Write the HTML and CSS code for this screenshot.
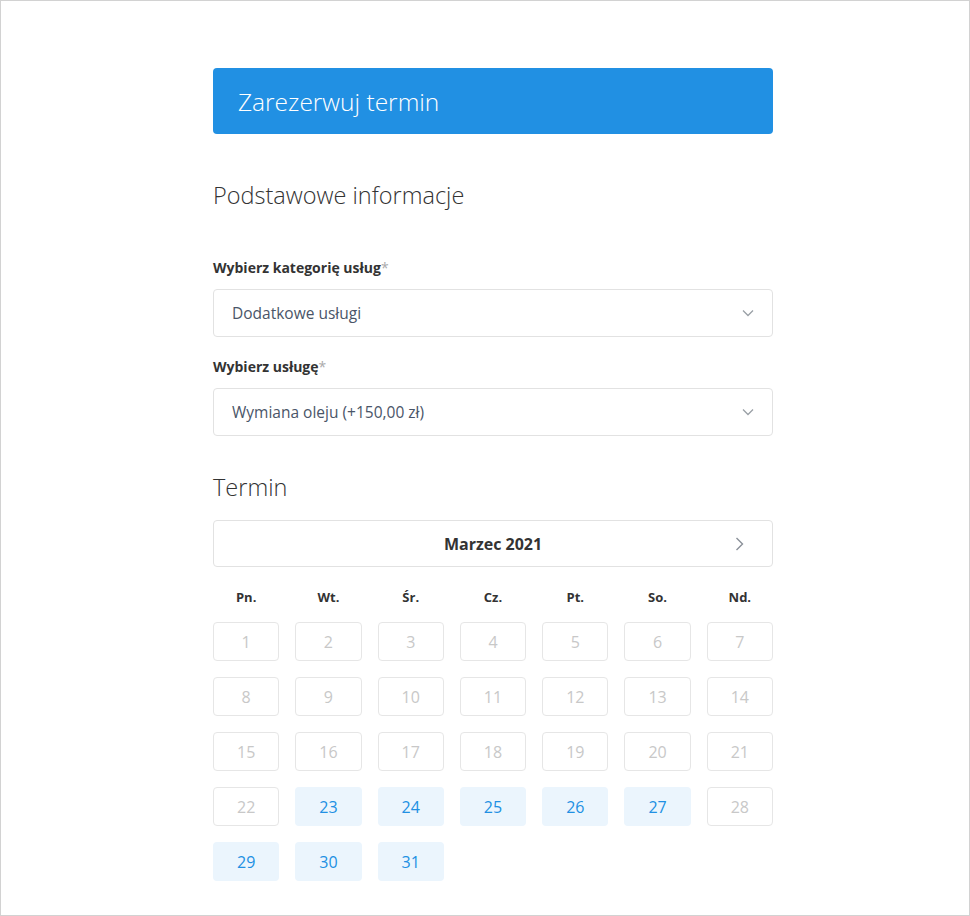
FILE: index.html
```html
<!DOCTYPE html>
<html lang="pl">
<head>
<meta charset="utf-8">
<link rel="stylesheet" href="styles.css">
</head>
<body>
<div class="frame">
  <main class="form">
    <header class="banner">Zarezerwuj termin</header>

    <h2 class="section-title first">Podstawowe informacje</h2>

    <label class="label">Wybierz kategorię usług<span class="req">*</span></label>
    <div class="select">
      <span>Dodatkowe usługi</span>
      <svg class="chev-down" width="12" height="8" viewBox="0 0 12 8"><path d="M1 1.5 L6 6.5 L11 1.5" fill="none" stroke="#9aa0a6" stroke-width="1.3"/></svg>
    </div>

    <label class="label">Wybierz usługę<span class="req">*</span></label>
    <div class="select">
      <span>Wymiana oleju (+150,00 zł)</span>
      <svg class="chev-down" width="12" height="8" viewBox="0 0 12 8"><path d="M1 1.5 L6 6.5 L11 1.5" fill="none" stroke="#9aa0a6" stroke-width="1.3"/></svg>
    </div>

    <h2 class="section-title">Termin</h2>

    <div class="month">
      <span class="month-name">Marzec 2021</span>
      <svg class="chev-right" width="9" height="14" viewBox="0 0 9 14"><path d="M1.5 1 L7.5 7 L1.5 13" fill="none" stroke="#8a9099" stroke-width="1.4"/></svg>
    </div>

    <div class="weekdays">
      <span>Pn.</span><span>Wt.</span><span>Śr.</span><span>Cz.</span><span>Pt.</span><span>So.</span><span>Nd.</span>
    </div>

    <div class="days">
      <div class="day off">1</div><div class="day off">2</div><div class="day off">3</div><div class="day off">4</div><div class="day off">5</div><div class="day off">6</div><div class="day off">7</div>
      <div class="day off">8</div><div class="day off">9</div><div class="day off">10</div><div class="day off">11</div><div class="day off">12</div><div class="day off">13</div><div class="day off">14</div>
      <div class="day off">15</div><div class="day off">16</div><div class="day off">17</div><div class="day off">18</div><div class="day off">19</div><div class="day off">20</div><div class="day off">21</div>
      <div class="day off">22</div><div class="day on">23</div><div class="day on">24</div><div class="day on">25</div><div class="day on">26</div><div class="day on">27</div><div class="day off">28</div>
      <div class="day on">29</div><div class="day on">30</div><div class="day on">31</div>
    </div>
  </main>
</div>
</body>
</html>
```

FILE: styles.css
```css
* { box-sizing: border-box; }
html, body { margin: 0; padding: 0; }
body {
  font-family: "Open Sans", "Noto Sans", sans-serif;
  color: #333;
  background: #fff;
}
.frame {
  width: 970px;
  height: 916px;
  border: 1px solid #d2d2d2;
  overflow: hidden;
}
.form {
  width: 560px;
  margin: 67px 0 0 212px;
  display: flex;
  flex-direction: column;
}
.banner {
  background: #2190e3;
  color: #fff;
  height: 66px;
  border-radius: 4px;
  padding: 0 25px;
  display: flex;
  align-items: center;
  font-size: 24.5px;
  font-weight: 300;
}
.section-title {
  margin: 0;
  font-size: 23.5px;
  font-weight: 300;
  line-height: 30px;
  color: #333;
}
.section-title.first { margin: 46px 0 48px; }
.label {
  font-size: 14px;
  font-weight: 700;
  line-height: 20px;
  color: #333;
  margin-bottom: 11px;
}
.req { color: #aaa; font-weight: 400; }
.select {
  height: 48px;
  border: 1px solid #e2e2e2;
  border-radius: 4px;
  padding: 0 18px;
  display: flex;
  align-items: center;
  justify-content: space-between;
  font-size: 15.5px;
  color: #4a5568;
  margin-bottom: 20px;
}
.select + .section-title { margin: 16px 0 18px; }
.month {
  height: 47px;
  border: 1px solid #e2e2e2;
  border-radius: 4px;
  display: flex;
  align-items: center;
  justify-content: center;
  position: relative;
}
.month-name { font-size: 16px; font-weight: 700; color: #333; }
.chev-right { position: absolute; right: 28px; top: 16px; }
.weekdays {
  display: grid;
  grid-template-columns: repeat(7, 1fr);
  column-gap: 16px;
  margin: 21px 0 16px;
  font-size: 13px;
  font-weight: 700;
  line-height: 18px;
  color: #333;
  text-align: center;
}
.days {
  display: grid;
  grid-template-columns: repeat(7, 1fr);
  gap: 16px 16px;
  grid-auto-rows: 39px;
}
.day {
  display: flex;
  align-items: center;
  justify-content: center;
  border-radius: 4px;
  font-size: 16px;
}
.day.off {
  border: 1px solid #e6e6e6;
  color: #c8c8c8;
}
.day.on {
  background: #ebf5fd;
  color: #2190e3;
}
```
